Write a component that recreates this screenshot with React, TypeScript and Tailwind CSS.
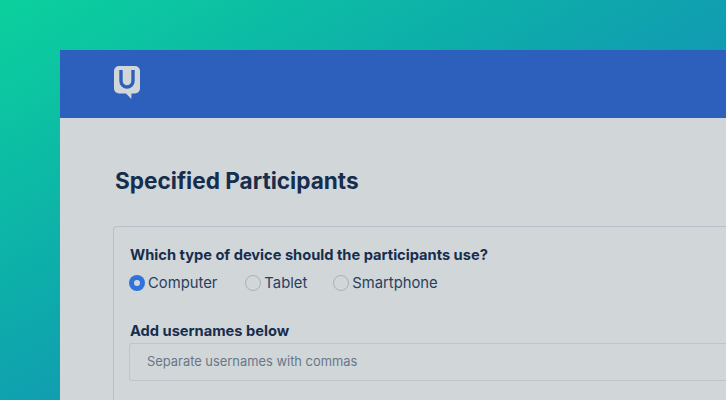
export default function App() {
  return (
    <div
      className="h-[400px] w-[726px] overflow-hidden pl-[60px] pt-[50px] bg-[linear-gradient(150deg,#0bd19d_0%,#0ea8ac_42%,#1491b8_68%,#1175bd_100%)]"
      style={{ fontFamily: '"Inter", "Liberation Sans", sans-serif' }}
    >
      <div className="h-[350px] w-[666px] bg-[#d1d6d9]">
        <div className="flex h-[68px] items-start bg-[#2d5fbd] pl-[54px] pt-[16px]">
          <svg width="26" height="33" viewBox="0 0 26 33" className="block">
            <path d="M5 0h16a5 5 0 0 1 5 5v17.500a5 5 0 0 1-5 5h-3.500l-.2 5.500-5.300-5.500H5a5 5 0 0 1-5-5V5a5 5 0 0 1 5-5z" fill="#d1d6d9" />
            <path d="M7 4v11a6 6 0 0 0 12 0V4" fill="none" stroke="#2d5fbd" strokeWidth="3.400" />
          </svg>
        </div>
        <div className="pl-[53px] pt-[47px]">
          <h1 className="ml-[2px] text-[22.6px] leading-[32px] font-bold text-[#172d4d]">Specified Participants</h1>
          <div className="mt-[29px] h-[300px] rounded-tl-[4px] border-t border-l border-[#b9bfc9] pl-[16px] pt-[18px]">
            <p className="text-[14.65px] leading-[20px] font-bold text-[#172d4d]">Which type of device should the participants use?</p>
            <div className="mt-[8px] flex items-center text-[14.8px] leading-[20px] text-[#2a3f5f]">
              <span className="-ml-px flex h-[16px] w-[16px] items-center justify-center rounded-full bg-[#2f72de]">
                <span className="h-[6px] w-[6px] rounded-full bg-[#d1d6d9]" />
              </span>
              <span className="ml-[3px]">Computer</span>
              <span className="ml-[28px] h-[16px] w-[16px] rounded-full border-[1.5px] border-[#aab0b6]" />
              <span className="ml-[3px]">Tablet</span>
              <span className="ml-[26px] h-[16px] w-[16px] rounded-full border-[1.5px] border-[#aab0b6]" />
              <span className="ml-[3px]">Smartphone</span>
            </div>
            <p className="mt-[28px] text-[14.65px] leading-[20px] font-bold text-[#172d4d]">Add usernames below</p>
            <div className="mt-[2px] -ml-px flex h-[38px] items-center rounded-l-[3px] border border-r-0 border-[#bfc5cd] pl-[17px] text-[12.9px] text-[#6a7688]">
              Separate usernames with commas
            </div>
          </div>
        </div>
      </div>
    </div>
  );
}
